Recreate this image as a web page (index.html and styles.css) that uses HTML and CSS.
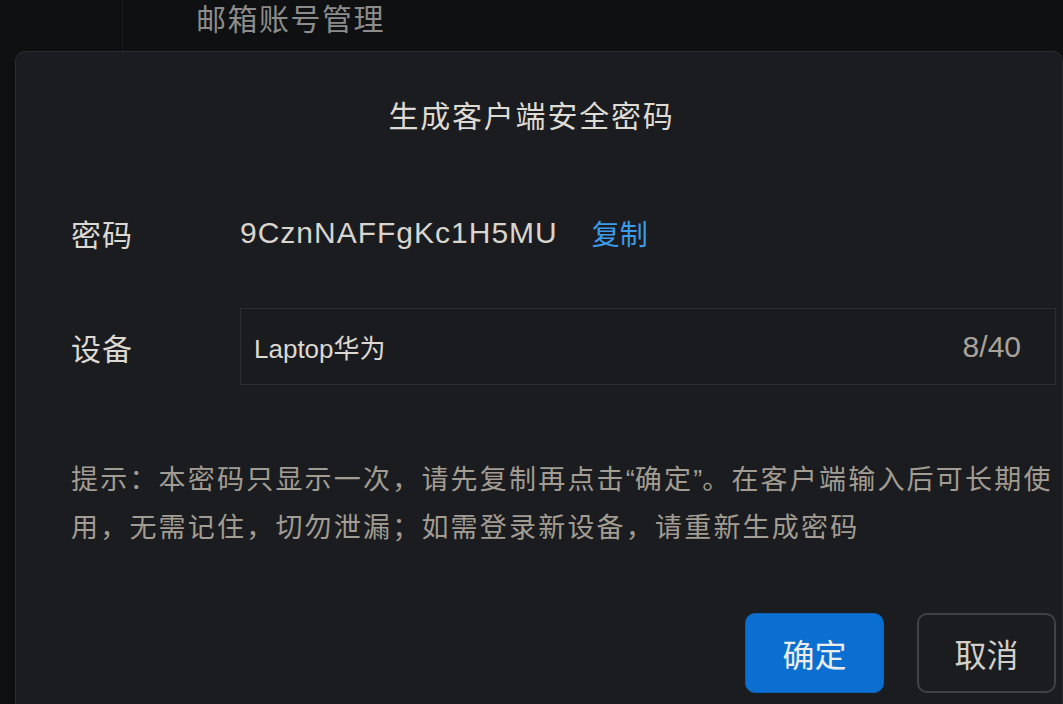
FILE: index.html
```html
<!DOCTYPE html>
<html lang="zh-CN">
<head>
<meta charset="utf-8">
<title>生成客户端安全密码</title>
<link rel="stylesheet" href="styles.css">
</head>
<body>
<div class="page">
  <aside class="sidebar"></aside>
  <main class="main">
    <h1 class="page-title">邮箱账号管理</h1>
  </main>
</div>

<div class="modal">
  <h2 class="modal-title">生成客户端安全密码</h2>
  <div class="row row-password">
    <span class="label">密码</span>
    <span class="value">9CznNAFFgKc1H5MU</span>
    <a class="copy">复制</a>
  </div>
  <div class="row row-device">
    <span class="label">设备</span>
    <div class="input">
      <span class="input-text">Laptop华为</span>
      <span class="counter">8/40</span>
    </div>
  </div>
  <p class="hint">提示：本密码只显示一次，请先复制再点击<span class="quote">“</span>确定<span class="quote">”</span>。在客户端输入后可长期使用，无需记住，切勿泄漏；如需登录新设备，请重新生成密码</p>
  <div class="actions">
    <button class="btn btn-primary">确定</button>
    <button class="btn btn-default">取消</button>
  </div>
</div>
</body>
</html>
```
FILE: styles.css
```css
html, body {
  margin: 0;
  padding: 0;
  width: 1063px;
  height: 704px;
  overflow: hidden;
  background: #0f1012;
  font-family: "Liberation Sans", "Noto Sans CJK SC", sans-serif;
}

.page {
  display: flex;
  height: 704px;
}

.sidebar {
  width: 122px;
  border-right: 1px solid #1d1e21;
  background: #0e0f11;
}

.main {
  flex: 1;
  padding-left: 73px;
}

.page-title {
  margin: 0;
  font-family: "Noto Sans CJK SC", sans-serif;
  font-weight: 400;
  font-size: 30px;
  line-height: 34px;
  color: #8c8c8c;
  letter-spacing: 1.5px;
}

.modal {
  position: absolute;
  left: 15px;
  top: 51px;
  width: 1048px;
  height: 700px;
  box-sizing: border-box;
  background: #1b1c1f;
  border: 1px solid #2a2c2f;
  border-radius: 10px;
  padding: 40px 6px 0 55px;
}

.modal-title {
  margin: 0 64px 0 0;
  text-align: center;
  font-family: "Noto Sans CJK SC", sans-serif;
  font-weight: 400;
  font-size: 30px;
  line-height: 44px;
  color: #dedad4;
  letter-spacing: 1.8px;
}

.row {
  display: flex;
  align-items: center;
}

.label {
  width: 169px;
  flex: none;
  font-family: "Noto Sans CJK SC", sans-serif;
  font-size: 30px;
  color: #dcd8d2;
  letter-spacing: 1px;
}

.row-password {
  margin-top: 75px;
  height: 44px;
}

.value {
  font-size: 30px;
  color: #d8d4ce;
  letter-spacing: 1px;
}

.copy {
  margin-left: 34px;
  font-family: "Noto Sans CJK SC", sans-serif;
  font-size: 28px;
  color: #3d9be9;
  cursor: pointer;
}

.row-device {
  margin-top: 53px;
}

.input {
  flex: 1;
  height: 77px;
  box-sizing: border-box;
  border: 1px solid #2c2e31;
  background: #1a1b1e;
  display: flex;
  align-items: center;
  justify-content: space-between;
  padding: 0 34px 0 13px;
}

.input-text {
  font-size: 26px;
  color: #dcd8d2;
}

.counter {
  font-size: 30px;
  color: #a8a29a;
}

.hint {
  margin: 69px 0 0 0;
  font-family: "Noto Sans CJK SC", sans-serif;
  font-size: 27px;
  line-height: 48px;
  color: #a29c93;
  letter-spacing: 2.2px;
}

.quote {
  font-family: "Liberation Sans", sans-serif;
  letter-spacing: 0;
  line-height: 1;
}

.actions {
  display: flex;
  justify-content: flex-end;
  gap: 33px;
  margin-top: 63px;
}

.btn {
  width: 139px;
  height: 80px;
  box-sizing: border-box;
  border-radius: 10px;
  font-family: "Noto Sans CJK SC", sans-serif;
  font-size: 32px;
  padding: 0;
  cursor: pointer;
}

.btn-primary {
  background: #0a6fd0;
  border: 1px solid #0b63b9;
  color: #ececec;
}

.btn-default {
  background: #1b1c1f;
  border: 2px solid #3e4244;
  color: #d2cec8;
}
```
